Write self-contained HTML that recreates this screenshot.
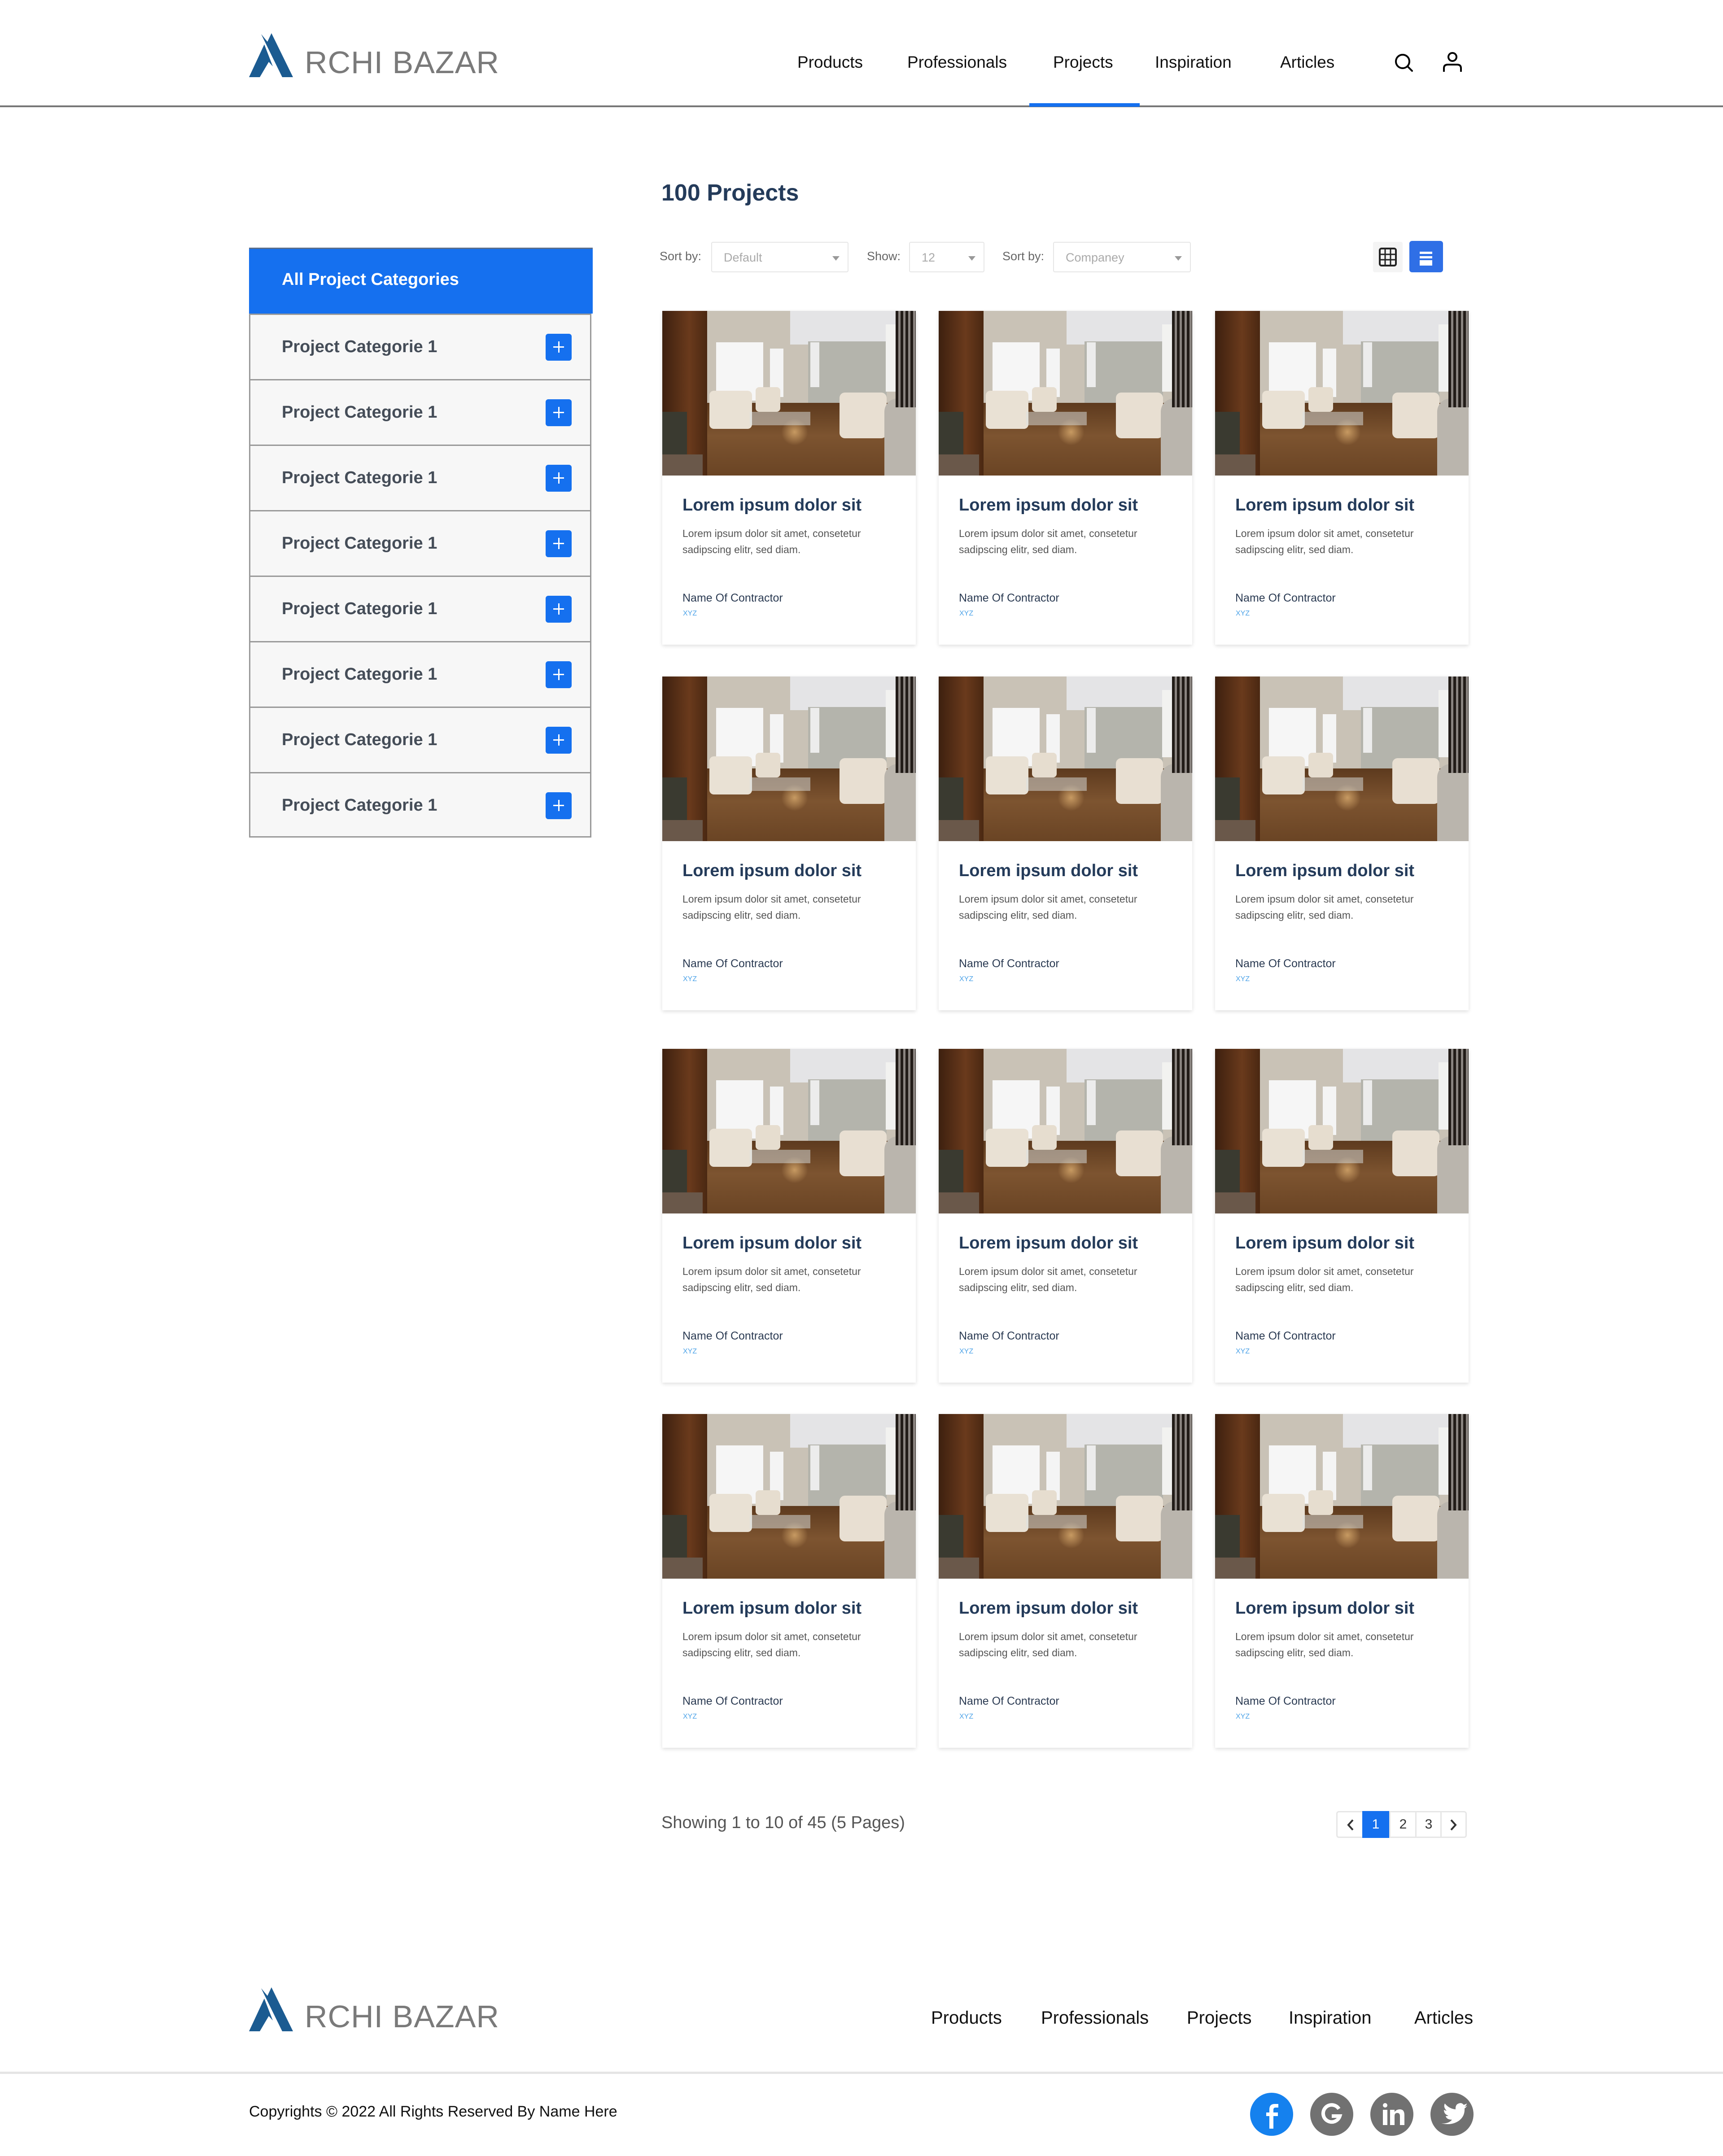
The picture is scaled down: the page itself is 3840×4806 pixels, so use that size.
<!DOCTYPE html>
<html><head><meta charset="utf-8"><style>
*{margin:0;padding:0;box-sizing:border-box}
body{width:3840px;height:4806px;position:relative;background:#fff;font-family:"Liberation Sans",sans-serif;overflow:hidden}
.a{position:absolute}
.nav{font-size:37px;color:#111;top:118px;white-space:nowrap}
.logo{width:600px;height:120px}
.logo .t{position:absolute;left:124px;top:30px;font-size:70px;color:#7a7a7a;letter-spacing:1px;line-height:1;white-space:nowrap}
.side{left:555px;width:763px;border:3px solid #999;border-top:none;background:#f7f7f7}
.row{position:absolute;left:0;width:760px;height:146px;border-top:3px solid #999;}
.row span{position:absolute;left:70px;top:50px;font-size:38px;font-weight:bold;color:#454d58}
.plus{position:absolute;left:658px;top:42px;width:58px;height:60px;background:#1570ef;border-radius:6px}
.plus:before{content:"";position:absolute;left:17px;top:28px;width:24px;height:3px;background:#fff}
.plus:after{content:"";position:absolute;left:28px;top:17px;width:3px;height:25px;background:#fff}
.lbl{font-size:27px;color:#666;top:556px}
.sel{top:539px;height:68px;border:2px solid #e6e6e6;border-radius:4px;font-size:27px;color:#aaa;padding:18px 26px}
.sel i{position:absolute;right:18px;top:30px;border-left:8px solid transparent;border-right:8px solid transparent;border-top:10px solid #999}
.card{width:565px;height:744px;background:#fff;box-shadow:0 3px 8px rgba(0,0,0,.13)}
.img{position:absolute;left:0;top:0;width:565px;height:367px;overflow:hidden;background:#c9c2b6}
.img div{position:absolute}
.card h3{position:absolute;left:45px;top:412px;font-size:38px;color:#243b5a;font-weight:bold;white-space:nowrap}
.card p{position:absolute;left:45px;top:478px;font-size:23px;line-height:36px;color:#555;width:490px}
.card .n{position:absolute;left:45px;top:626px;font-size:25px;color:#2a3a52}
.card .x{position:absolute;left:46px;top:666px;font-size:16px;color:#4da3e8}
.fnav{font-size:40px;color:#111;top:4476px}
.soc{width:96px;height:96px;border-radius:50%;background:#717171;top:4665px}
</style></head><body>

<div class="a logo" style="left:555px;top:74px">
<svg class="a" style="left:0;top:0" width="110" height="100" viewBox="0 0 110 100"><polygon points="0,98 34,25 53,74 44,64 24,98" fill="#1b5b91"/><polygon points="27,2 41,19 50,0 98,98 74,98" fill="#1b5b91"/></svg>
<div class="t">RCHI BAZAR</div></div>
<div class="a nav" style="left:1777px">Products</div>
<div class="a nav" style="left:2022px">Professionals</div>
<div class="a nav" style="left:2347px">Projects</div>
<div class="a nav" style="left:2574px">Inspiration</div>
<div class="a nav" style="left:2853px">Articles</div>
<svg class="a" style="left:3105px;top:116px" width="50" height="50" viewBox="0 0 50 50"><circle cx="21" cy="21" r="15" fill="none" stroke="#000" stroke-width="4"/><line x1="32" y1="32" x2="42" y2="42" stroke="#000" stroke-width="4" stroke-linecap="round"/></svg>
<svg class="a" style="left:3213px;top:114px" width="48" height="50" viewBox="0 0 48 50"><circle cx="24" cy="13" r="9" fill="none" stroke="#000" stroke-width="4"/><path d="M5 46 V38 Q5 30 14 30 H34 Q43 30 43 38 V46" fill="none" stroke="#000" stroke-width="4"/></svg>
<div class="a" style="left:0;top:235px;width:3840px;height:4px;background:#777"></div>
<div class="a" style="left:2294px;top:230px;width:246px;height:8px;background:#1570ef"></div>

<div class="a" style="left:1474px;top:400px;font-size:52px;font-weight:bold;color:#243b5a">100 Projects</div>

<div class="a lbl" style="left:1470px">Sort by:</div>
<div class="a sel" style="left:1585px;width:306px">Default<i></i></div>
<div class="a lbl" style="left:1932px">Show:</div>
<div class="a sel" style="left:2026px;width:168px">12<i></i></div>
<div class="a lbl" style="left:2234px">Sort by:</div>
<div class="a sel" style="left:2347px;width:307px">Companey<i></i></div>
<div class="a" style="left:3060px;top:539px;width:66px;height:68px;background:#f4f4f4;border-radius:4px"></div>
<svg class="a" style="left:3072px;top:550px" width="42" height="46" viewBox="0 0 42 46"><rect x="3" y="4" width="36" height="38" rx="4" fill="none" stroke="#222" stroke-width="4"/><line x1="15" y1="4" x2="15" y2="42" stroke="#222" stroke-width="3"/><line x1="27" y1="4" x2="27" y2="42" stroke="#222" stroke-width="3"/><line x1="3" y1="17" x2="39" y2="17" stroke="#222" stroke-width="3"/><line x1="3" y1="29" x2="39" y2="29" stroke="#222" stroke-width="3"/></svg>
<div class="a" style="left:3141px;top:537px;width:75px;height:70px;background:#2f6fe6;border-radius:6px"></div>
<div class="a" style="left:3164px;top:561px;width:28px;height:5px;background:#fff"></div>
<div class="a" style="left:3164px;top:571px;width:28px;height:5px;background:#fff"></div>
<div class="a" style="left:3164px;top:580px;width:28px;height:12px;background:#fff"></div>

<div class="a side" style="top:552px;height:1315px">
<div class="a" style="left:-3px;top:0;width:766px;height:147px;background:#1570ef;border-top:3px solid #5a6e8c"></div>
<div class="a" style="left:70px;top:50px;font-size:38px;font-weight:bold;color:#fff">All Project Categories</div>
<div class="row" style="top:147px"><span>Project Categorie 1</span><b class="plus"></b></div>
<div class="row" style="top:293px"><span>Project Categorie 1</span><b class="plus"></b></div>
<div class="row" style="top:439px"><span>Project Categorie 1</span><b class="plus"></b></div>
<div class="row" style="top:585px"><span>Project Categorie 1</span><b class="plus"></b></div>
<div class="row" style="top:731px"><span>Project Categorie 1</span><b class="plus"></b></div>
<div class="row" style="top:877px"><span>Project Categorie 1</span><b class="plus"></b></div>
<div class="row" style="top:1023px"><span>Project Categorie 1</span><b class="plus"></b></div>
<div class="row" style="top:1169px"><span>Project Categorie 1</span><b class="plus"></b></div>
</div>

<div id="cards"></div>
<script>
var img='<div class="img">'+
'<div style="left:285px;top:0;width:282px;height:75px;background:#e4e4e6"></div>'+
'<div style="left:325px;top:68px;width:175px;height:140px;background:#b4b4ac"></div>'+
'<div style="left:120px;top:70px;width:105px;height:130px;background:#f6f6f6"></div>'+
'<div style="left:240px;top:84px;width:30px;height:108px;background:#f4f4f4"></div>'+
'<div style="left:80px;top:66px;width:20px;height:140px;background:#f0f0f0"></div>'+
'<div style="left:330px;top:70px;width:20px;height:100px;background:#ececec"></div>'+
'<div style="left:498px;top:30px;width:24px;height:150px;background:#f2f2f0"></div>'+
'<div style="left:95px;top:205px;width:410px;height:162px;background:linear-gradient(180deg,#5d3a1e,#7d5430 45%,#6a4424)"></div>'+
'<div style="left:265px;top:240px;width:60px;height:60px;background:radial-gradient(#c79a62,rgba(0,0,0,0) 70%)"></div>'+
'<div style="left:105px;top:178px;width:95px;height:85px;background:#e9e1d4;border-radius:10px"></div>'+
'<div style="left:208px;top:170px;width:55px;height:55px;background:#e6ddcf;border-radius:8px"></div>'+
'<div style="left:395px;top:182px;width:105px;height:102px;background:#e8dfd2;border-radius:12px"></div>'+
'<div style="left:195px;top:225px;width:135px;height:30px;background:rgba(220,225,225,.5)"></div>'+
'<div style="left:495px;top:195px;width:72px;height:172px;background:#bab5ad;border-radius:30px 0 0 0"></div>'+
'<div style="left:520px;top:0;width:47px;height:215px;background:repeating-linear-gradient(90deg,#221c18 0 6px,#8a8480 6px 11px)"></div>'+
'<div style="left:0;top:0;width:100px;height:367px;background:linear-gradient(90deg,#3d200f,#6a3a1c 60%,#4a2812)"></div>'+
'<div style="left:0;top:225px;width:55px;height:140px;background:#3a3a30"></div>'+
'<div style="left:0;top:320px;width:90px;height:47px;background:#6a584a"></div>'+
'</div>';
var xs=[1476,2092,2708],ys=[693,1508,2338,3152],h='';
ys.forEach(function(y){xs.forEach(function(x){
h+='<div class="a card" style="left:'+x+'px;top:'+y+'px">'+img+'<h3>Lorem ipsum dolor sit</h3><p>Lorem ipsum dolor sit amet, consetetur sadipscing elitr, sed diam.</p><div class="n">Name Of Contractor</div><div class="x">XYZ</div></div>';
});});
document.getElementById('cards').innerHTML=h;
</script>

<div class="a" style="left:1474px;top:4042px;font-size:38px;color:#555">Showing 1 to 10 of 45 (5 Pages)</div>
<div class="a" style="left:2978px;top:4037px;width:291px;height:60px;border:3px solid #e6e6e6;border-radius:6px;font-size:30px;color:#333">
<div class="a" style="left:55px;top:-3px;width:60px;height:60px;background:#1570ef;color:#fff;text-align:center;line-height:60px">1</div>
<div class="a" style="left:115px;top:0;width:3px;height:54px;background:#e6e6e6"></div>
<div class="a" style="left:118px;top:0;width:56px;text-align:center;line-height:54px">2</div>
<div class="a" style="left:173px;top:0;width:3px;height:54px;background:#e6e6e6"></div>
<div class="a" style="left:176px;top:0;width:54px;text-align:center;line-height:54px">3</div>
<div class="a" style="left:229px;top:0;width:3px;height:54px;background:#e6e6e6"></div>
<svg class="a" style="left:18px;top:14px" width="24" height="28" viewBox="0 0 24 28"><path d="M16 3 L6 14 L16 25" fill="none" stroke="#333" stroke-width="4"/></svg>
<svg class="a" style="left:245px;top:14px" width="24" height="28" viewBox="0 0 24 28"><path d="M8 3 L18 14 L8 25" fill="none" stroke="#333" stroke-width="4"/></svg>
</div>

<div class="a logo" style="left:555px;top:4430px">
<svg class="a" style="left:0;top:0" width="110" height="100" viewBox="0 0 110 100"><polygon points="0,98 34,25 53,74 44,64 24,98" fill="#1b5b91"/><polygon points="27,2 41,19 50,0 98,98 74,98" fill="#1b5b91"/></svg>
<div class="t">RCHI BAZAR</div></div>
<div class="a fnav" style="left:2075px">Products</div>
<div class="a fnav" style="left:2320px">Professionals</div>
<div class="a fnav" style="left:2645px">Projects</div>
<div class="a fnav" style="left:2872px">Inspiration</div>
<div class="a fnav" style="left:3152px">Articles</div>
<div class="a" style="left:0;top:4618px;width:3840px;height:5px;background:#e5e5e5"></div>
<div class="a" style="left:555px;top:4688px;font-size:34px;color:#111">Copyrights © 2022 All Rights Reserved By Name Here</div>
<div class="a soc" style="left:2786px;background:#1581ee"><svg width="96" height="96" viewBox="0 0 96 96"><path d="M52 80 V52 H62 V44 H52 V38 Q52 33 57 33 H63 V25 H55 Q43 25 43 37 V44 H36 V52 H43 V80 Z" fill="#fff"/></svg></div>
<div class="a soc" style="left:2920px"><svg width="96" height="96" viewBox="0 0 96 96"><path d="M64 36 A19 19 0 1 0 66 52 H48" fill="none" stroke="#fff" stroke-width="8"/></svg></div>
<div class="a soc" style="left:3054px"><svg width="96" height="96" viewBox="0 0 96 96"><circle cx="33" cy="28" r="5" fill="#fff"/><rect x="28" y="38" width="10" height="34" fill="#fff"/><path d="M44 72 V38 H54 V43 Q58 37 66 37 Q76 37 76 50 V72 H66 V52 Q66 45 60 45 Q54 45 54 52 V72 Z" fill="#fff"/></svg></div>
<div class="a soc" style="left:3188px"><svg width="96" height="96" viewBox="0 0 96 96"><path d="M24 68 Q40 70 48 60 Q36 60 34 52 Q38 52 40 51 Q30 48 30 38 Q33 40 36 40 Q28 32 32 24 Q42 36 56 37 Q55 24 67 23 Q71 23 74 27 Q78 26 81 24 Q80 29 76 31 Q79 31 82 29 Q79 33 76 35 Q77 52 64 62 Q47 74 24 68 Z" fill="#fff"/></svg></div>
</body></html>
